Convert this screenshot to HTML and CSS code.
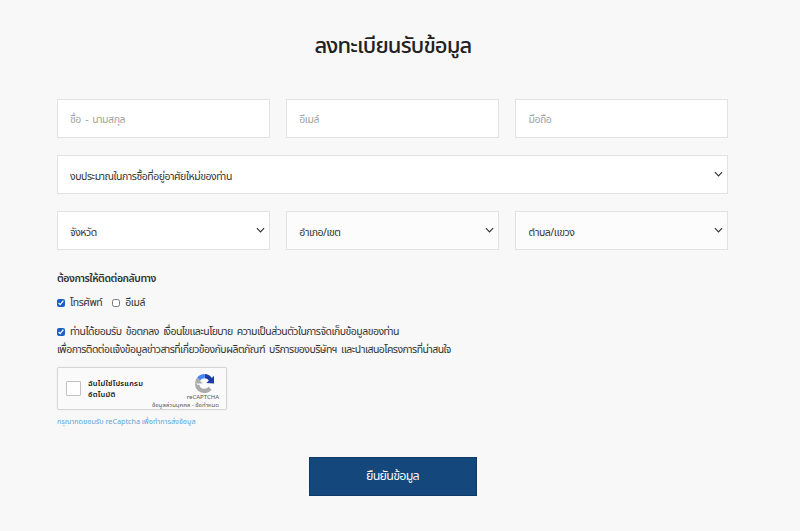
FILE: index.html
```html
<!DOCTYPE html>
<html lang="th">
<head>
<meta charset="utf-8">
<title>ลงทะเบียนรับข้อมูล</title>
<link rel="stylesheet" href="styles.css">
</head>
<body>
<main class="page">
  <h1 class="title">ลงทะเบียนรับข้อมูล</h1>
  <form class="form">
    <div class="row">
      <input class="field" type="text" placeholder="ชื่อ - นามสกุล">
      <input class="field" type="text" placeholder="อีเมล์">
      <input class="field" type="text" placeholder="มือถือ">
    </div>
    <div class="row row-one">
      <div class="select">
        <select class="field field-select"><option>งบประมาณในการซื้อที่อยู่อาศัยใหม่ของท่าน</option></select>
        <svg class="chevron" viewBox="0 0 10 6"><path d="M1 1l4 4 4-4"/></svg>
      </div>
    </div>
    <div class="row">
      <div class="select">
        <select class="field field-select"><option>จังหวัด</option></select>
        <svg class="chevron" viewBox="0 0 10 6"><path d="M1 1l4 4 4-4"/></svg>
      </div>
      <div class="select">
        <select class="field field-select muted"><option>อำเภอ/เขต</option></select>
        <svg class="chevron" viewBox="0 0 10 6"><path d="M1 1l4 4 4-4"/></svg>
      </div>
      <div class="select">
        <select class="field field-select muted"><option>ตำบล/แขวง</option></select>
        <svg class="chevron" viewBox="0 0 10 6"><path d="M1 1l4 4 4-4"/></svg>
      </div>
    </div>
    <p class="contact-title">ต้องการให้ติดต่อกลับทาง</p>
    <div class="contact-options">
      <label class="check"><input type="checkbox" checked>โทรศัพท์</label>
      <label class="check"><input type="checkbox">อีเมล์</label>
    </div>
    <div class="consent">
      <label class="check"><input type="checkbox" checked>ท่านได้ยอมรับ ข้อตกลง เงื่อนไขและนโยบาย ความเป็นส่วนตัวในการจัดเก็บข้อมูลของท่าน</label>
      <p class="consent-line">เพื่อการติดต่อแจ้งข้อมูลข่าวสารที่เกี่ยวข้องกับผลิตภัณฑ์ บริการของบริษัทฯ และนำเสนอโครงการที่น่าสนใจ</p>
    </div>
    <div class="captcha">
      <span class="captcha-box"></span>
      <span class="captcha-text">ฉันไม่ใช่โปรแกรม<br>อัตโนมัติ</span>
      <div class="captcha-brand">
        <svg class="captcha-logo" viewBox="0 0 32 32">
          <path fill="#1c3aa9" d="M32 16V3l-3.600 3.600A16 16 0 0 0 16 0v7a9 9 0 0 1 7.400 3.800L19 15z"/>
          <path fill="#4285f4" d="M16 0A16 16 0 0 0 3.600 6L8.600 11A9 9 0 0 1 16 7z"/>
          <path fill="#ababab" d="M0 16h13l-4.200-4.200-.2-.8L3.600 6A16 16 0 0 0 0 16z"/>
          <path fill="#ababab" d="M0 16a16 16 0 0 0 28 10.600l-5-5A9 9 0 0 1 7.200 18H3.500l-.2-2z"/>
        </svg>
        <span class="captcha-name">reCAPTCHA</span>
        <span class="captcha-links">ข้อมูลส่วนบุคคล - ข้อกำหนด</span>
      </div>
    </div>
    <p class="captcha-note">กรุณากดยอมรับ reCaptcha เพื่อทำการส่งข้อมูล</p>
    <div class="actions">
      <button class="submit" type="button">ยืนยันข้อมูล</button>
    </div>
  </form>
</main>
</body>
</html>
```
FILE: styles.css
```css
* { box-sizing: border-box; }
html, body { margin: 0; height: 100%; }
body {
  background: #f8f8f8;
  color: #222;
  font-family: "Noto Sans Thai", "Noto Sans Thai Looped", "Kanit", "Prompt", "Noto Sans", "Open Sans", sans-serif;
  font-size: 10.5px;
  letter-spacing: -0.46px;
  word-spacing: 2px;
  overflow: hidden;
}
.page { padding: 31px 72px 0 57px; }
.title {
  margin: 0;
  height: 68px;
  text-align: center;
  font-size: 22px;
  line-height: 32px;
  font-weight: 500;
  letter-spacing: -0.85px;
  padding-left: 1px;
  color: #222;
}
.row {
  display: grid;
  grid-template-columns: repeat(3, 1fr);
  column-gap: 16.7px;
  margin-bottom: 17px;
}
.row-one { grid-template-columns: 1fr; }
.field {
  display: block;
  width: 100%;
  height: 39px;
  padding: 2px 12px 0;
  background: #fff;
  border: 1px solid #e2e2e2;
  border-radius: 0;
  font: inherit;
  letter-spacing: inherit;
  word-spacing: inherit;
  color: #333;
  outline: none;
}
.field::placeholder { color: #a3a3a3; opacity: 1; }
.field-select { appearance: none; -webkit-appearance: none; padding: 4px 28px 0 12px; }
.muted { background: #fcfcfc; }
.select { position: relative; }
.chevron {
  position: absolute;
  right: 5px;
  top: 16px;
  width: 9px;
  height: 6px;
  fill: none;
  stroke: #333;
  stroke-width: 1.3;
}
.contact-title {
  margin: 21px 0 0;
  line-height: 16px;
  font-weight: 600;
  color: #333;
}
.contact-options { display: flex; gap: 10px; margin-top: 8px; height: 16px; }
.check { display: flex; align-items: center; line-height: 16px; color: #333; }
.check input {
  width: 8px;
  height: 8px;
  margin: 0 5px 0 0;
  accent-color: #1a5fc4;
  flex: none;
}
.consent { margin-top: 13px; letter-spacing: -0.53px; }
.consent-line { margin: 2px 0 0; line-height: 16px; color: #333; }
.captcha {
  display: flex;
  align-items: flex-start;
  width: 170px;
  height: 43px;
  margin-top: 9px;
  padding: 13px 3px 0 8px;
  background: #fafafa;
  border: 1px solid #d6d6d6;
  border-radius: 2px;
  position: relative;
  box-shadow: 0 0 2px rgba(0, 0, 0, .08);
}
.captcha-box {
  flex: none;
  width: 15px;
  height: 15px;
  margin-right: 7px;
  background: #fff;
  border: 1px solid #c1c1c1;
  border-radius: 1px;
}
.captcha-text { font-size: 7.5px; line-height: 10.5px; color: #111; font-weight: 600; margin-top: -2px; letter-spacing: .25px; word-spacing: 0; }
.captcha-brand {
  position: absolute;
  right: 7px;
  top: 6px;
  display: flex;
  flex-direction: column;
  align-items: flex-end;
  letter-spacing: 0;
  word-spacing: 0;
}
.captcha-logo { width: 19px; height: 19px; margin-right: 5px; }
.captcha-name { font-size: 6px; line-height: 8px; margin-top: 1px; color: #555; }
.captcha-links { font-size: 6px; line-height: 7px; color: #555; white-space: nowrap; }
.captcha-note { margin: 6px 0 0; font-size: 7.2px; line-height: 12px; color: #55a6d8; letter-spacing: 0; word-spacing: 0; }
.actions { display: flex; justify-content: center; margin-top: 29px; }
.submit {
  width: 168px;
  height: 39px;
  background: #14477b;
  border: 1px solid #0e3a68;
  color: #f2f6fa;
  font: inherit;
  font-size: 12.5px;
  letter-spacing: -0.75px;
  padding: 0;
}
```
